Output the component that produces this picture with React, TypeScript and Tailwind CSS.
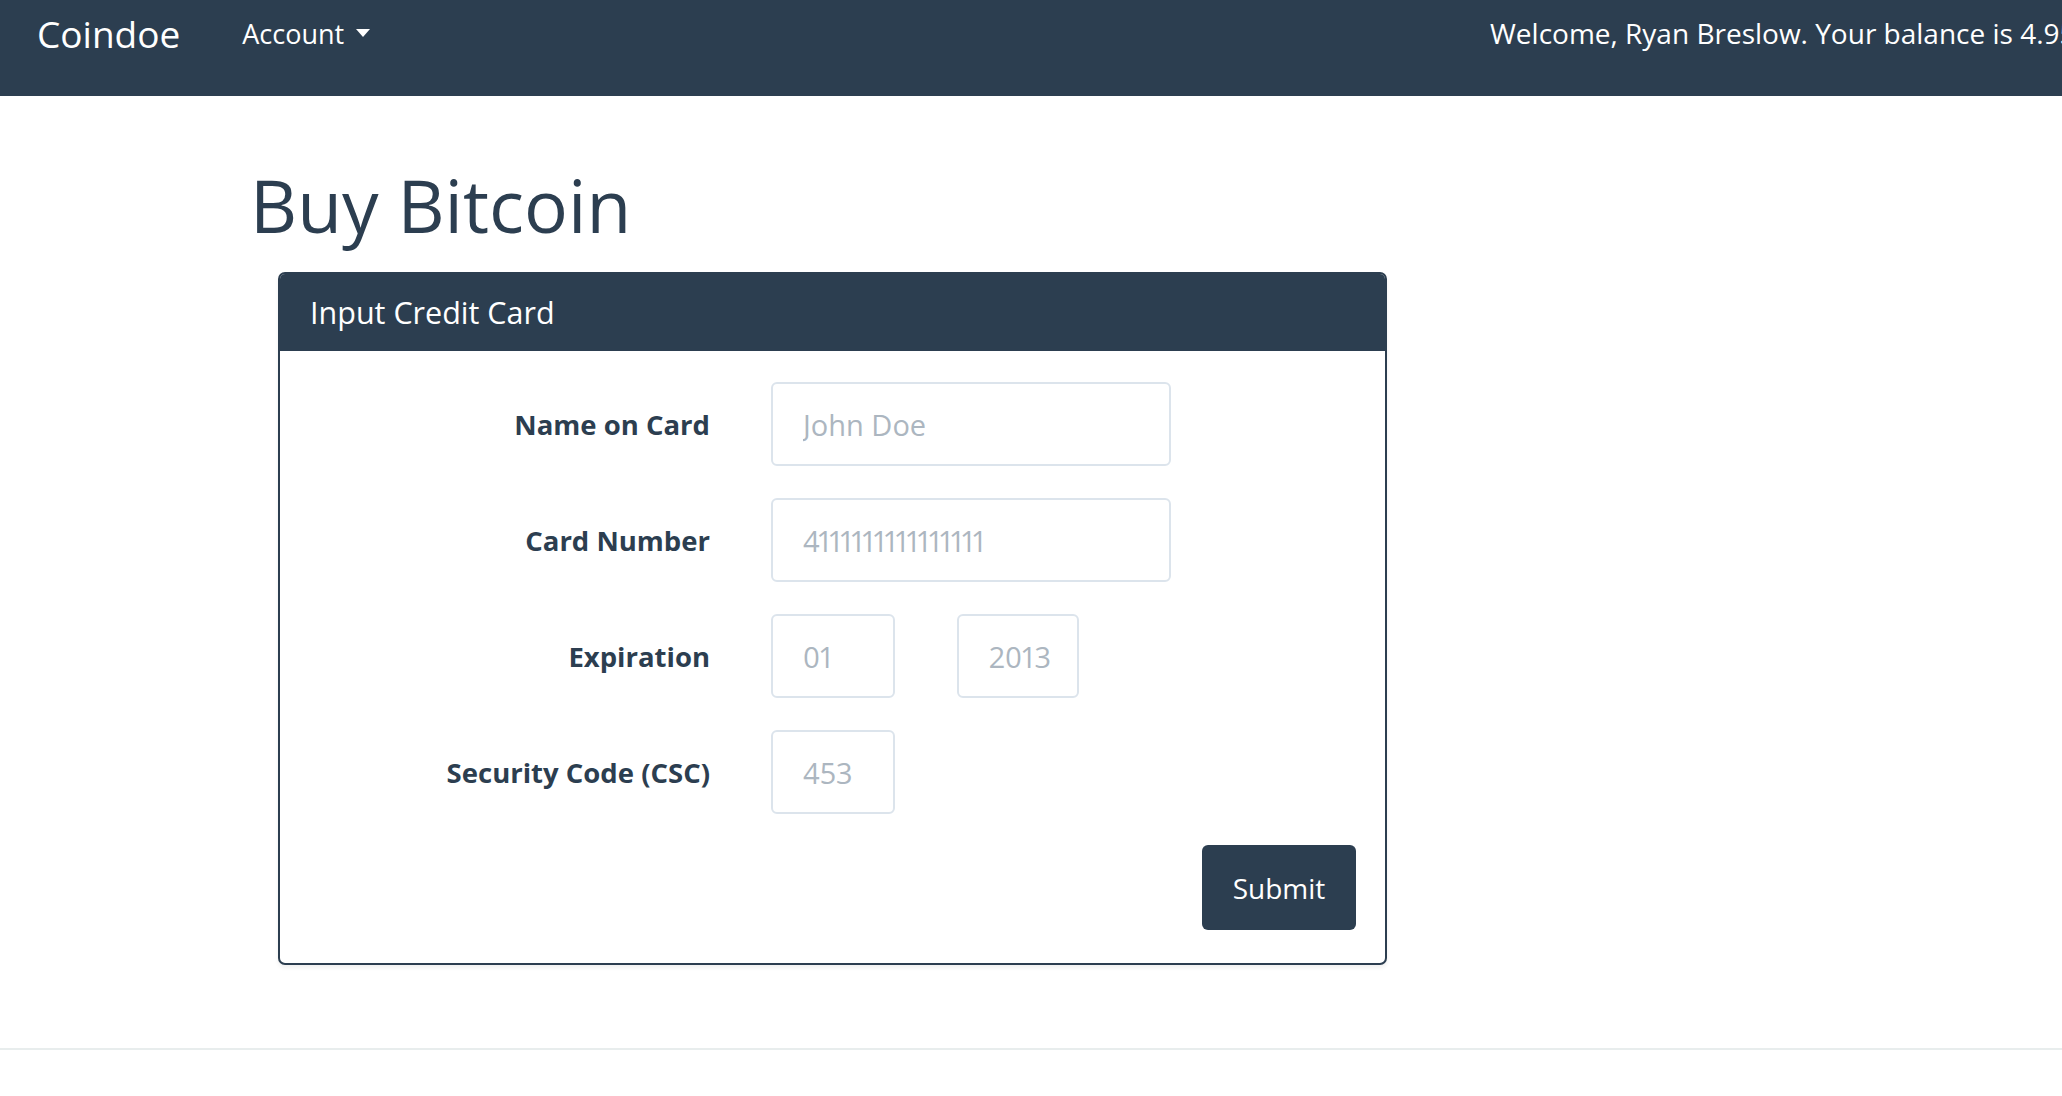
import React from "react";

const font = { fontFamily: '"Open Sans", "Liberation Sans", sans-serif' };

function Row({ label, children }: { label: string; children: React.ReactNode }) {
  return (
    <div className="flex items-center">
      <label className="w-[430px] shrink-0 text-right text-[27.5px] font-bold text-[#2c3e50]">{label}</label>
      <div className="ml-[61px] flex items-center">{children}</div>
    </div>
  );
}

function Field({ placeholder, w, tight }: { placeholder: string; w: string; tight?: boolean }) {
  return (
    <input
      placeholder={placeholder}
      className={`${w} ${tight ? "tracking-[-1.5px]" : ""} h-[84px] rounded-[6px] border-2 border-[#dce4ec] bg-white pl-[30px] pr-[4px] text-[29px] text-[#2c3e50] proportional-nums outline-none placeholder:text-[#acb6c0]`}
      style={font}
    />
  );
}

export default function App() {
  return (
    <div className="relative min-h-[1096px] w-full overflow-hidden bg-white" style={font}>
      <nav className="h-[96px] bg-[#2c3e50] text-white">
        <div className="flex h-[66px] items-center whitespace-nowrap">
          <div className="flex w-[1490px] shrink-0 items-center pl-[37px]">
            <span className="text-[37px] leading-none">Coindoe</span>
            <span className="ml-[62px] flex items-center text-[27px] leading-none">
              Account
              <svg className="ml-[12px]" width="14" height="8" viewBox="0 0 14 8">
                <path d="M0 0 L14 0 L7 8 Z" fill="white" />
              </svg>
            </span>
          </div>
          <span className="text-[28px] leading-none">Welcome, Ryan Breslow. Your balance is 4.95 BTC</span>
        </div>
      </nav>

      <main className="pl-[250px]">
        <h1 className="mt-[69px] text-[73px] font-normal leading-[1.1] text-[#2c3e50]">Buy Bitcoin</h1>
        <div className="ml-[28px] mt-[27px] w-[1109px] overflow-hidden rounded-[7px] border-2 border-[#2c3e50] bg-white shadow-[0_3px_4px_rgba(0,0,0,0.06)]">
          <div className="flex h-[77px] items-center bg-[#2c3e50] px-[30px] text-[30.5px] text-white">Input Credit Card</div>
          <div className="flex flex-col gap-[32px] pt-[31px]">
            <Row label="Name on Card">
              <Field placeholder="John Doe" w="w-[400px]" />
            </Row>
            <Row label="Card Number">
              <Field placeholder="4111111111111111" w="w-[400px]" tight />
            </Row>
            <Row label="Expiration">
              <Field placeholder="01" w="w-[124px]" />
              <div className="ml-[62px]">
                <Field placeholder="2013" w="w-[122px]" />
              </div>
            </Row>
            <Row label="Security Code (CSC)">
              <Field placeholder="453" w="w-[124px]" />
            </Row>
          </div>
          <div className="flex justify-end pb-[33px] pr-[29px] pt-[31px]">
            <button className="h-[85px] w-[154px] rounded-[6px] bg-[#2c3e50] text-[28px] font-medium text-white" style={font}>
              Submit
            </button>
          </div>
        </div>
      </main>

      <div className="absolute left-0 right-0 top-[1048px] h-[2px] bg-[#e8eded]" />
    </div>
  );
}
